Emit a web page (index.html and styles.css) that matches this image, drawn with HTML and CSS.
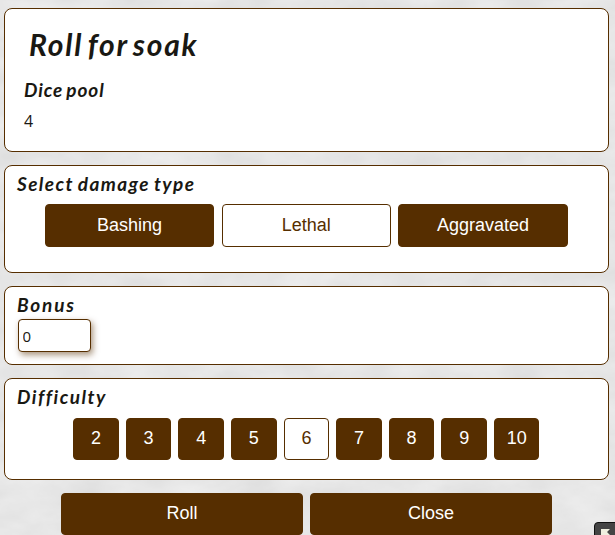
FILE: index.html
```html
<!DOCTYPE html>
<html lang="en">
<head>
<meta charset="utf-8">
<title>Roll for soak</title>
<link rel="stylesheet" href="styles.css">
</head>
<body>
<svg class="paper" width="615" height="535" aria-hidden="true">
  <filter id="grain" x="0" y="0" width="100%" height="100%" color-interpolation-filters="sRGB">
    <feTurbulence type="fractalNoise" baseFrequency="0.018 0.035" numOctaves="4" seed="8"/>
    <feColorMatrix values="0.08 0 0 0 0.862  0.08 0 0 0 0.862  0.08 0 0 0 0.862  0 0 0 0 1"/>
  </filter>
  <rect width="615" height="535" filter="url(#grain)"/>
</svg>
<form class="dialog">
  <section class="panel summary">
    <h1 class="title">Roll for soak</h1>
    <h2 class="heading pool">Dice pool</h2>
    <div class="value">4</div>
  </section>
  <section class="panel damage">
    <h2 class="heading select">Select damage type</h2>
    <div class="types">
      <button type="button" class="btn">Bashing</button>
      <button type="button" class="btn active">Lethal</button>
      <button type="button" class="btn">Aggravated</button>
    </div>
  </section>
  <section class="panel bonus">
    <h2 class="heading bonus-label">Bonus</h2>
    <input class="field" type="text" value="0">
  </section>
  <section class="panel difficulty">
    <h2 class="heading difficulty-label">Difficulty</h2>
    <div class="numbers">
      <button type="button" class="btn">2</button>
      <button type="button" class="btn">3</button>
      <button type="button" class="btn">4</button>
      <button type="button" class="btn">5</button>
      <button type="button" class="btn active">6</button>
      <button type="button" class="btn">7</button>
      <button type="button" class="btn">8</button>
      <button type="button" class="btn">9</button>
      <button type="button" class="btn">10</button>
    </div>
  </section>
  <div class="actions">
    <button type="button" class="btn">Roll</button>
    <button type="button" class="btn">Close</button>
  </div>
</form>
<div class="resize">
  <svg width="21" height="13" viewBox="0 0 21 13"><path d="M6 6H15L12 9L17 14H11L9 12L6 15Z" fill="#f0f0e0"/></svg>
</div>
</body>
</html>
```

FILE: styles.css
```css
* { box-sizing: border-box; }
body {
  position: relative;
  width: 615px;
  height: 535px;
  margin: 0;
  overflow: hidden;
  background: #e6e6e6;
  color: #191813;
  font-family: "Liberation Sans", Arial, sans-serif;
}
.paper { position: absolute; inset: 0; z-index: -1; }
.dialog {
  display: flex;
  flex-direction: column;
  gap: 13px;
  padding: 8px 6px 0 4px;
}
.panel {
  border: 1px solid #562e00;
  border-radius: 8px;
  background: #fff;
}
.summary { height: 144px; padding: 15px 19px; }
.damage { height: 108px; padding: 5px 12px; }
.bonus { height: 79px; padding: 5px 12px; }
.difficulty { height: 102px; padding: 5px 12px; }
.title, .heading {
  margin: 0;
  font-family: Lato, "Open Sans", sans-serif;
  font-style: italic;
  font-weight: 700;
  white-space: nowrap;
}
.title {
  height: 40px;
  padding-left: 5px;
  font-size: 30px;
  line-height: 40px;
  letter-spacing: 1.8px;
  word-spacing: -4px;
}
.heading { height: 27px; font-size: 19px; line-height: 26px; }
.pool { margin-top: 13px; letter-spacing: 0.9px; word-spacing: -2px; }
.value {
  margin-top: 6px;
  font: 16px/22px "Open Sans", "Noto Sans", sans-serif;
}
.select { letter-spacing: 1.4px; word-spacing: -1.5px; }
.bonus-label { letter-spacing: 1.8px; }
.difficulty-label { letter-spacing: 1.5px; }
.types {
  display: grid;
  grid-template-columns: repeat(3, 1fr);
  gap: 7.5px;
  height: 43px;
  margin: 6px 28.5px 0 28px;
}
.btn {
  padding: 0 0 2px;
  border: 1px solid #562e00;
  border-radius: 4px;
  background: #562e00;
  color: #fff;
  font: 18px/38px "Liberation Sans", Arial, sans-serif;
  text-align: center;
}
.btn.active { background: #fff; color: #562e00; }
.field {
  display: block;
  width: 73px;
  height: 33px;
  margin-left: 0.5px;
  padding: 0 4px;
  border: 1px solid #562e00;
  border-radius: 4px;
  background: #fff;
  box-shadow: 2px 3px 6px rgba(86, 46, 0, 0.5);
  color: #191813;
  font: 15px/31px "Open Sans", "Noto Sans", sans-serif;
}
.numbers {
  display: grid;
  grid-template-columns: repeat(9, 1fr);
  gap: 7.2px;
  height: 42px;
  margin: 7px 56.5px 0 56.3px;
}
.actions {
  display: grid;
  grid-template-columns: 1fr 1fr;
  gap: 7px;
  height: 42px;
  margin: 0 57px;
}
.resize {
  position: absolute;
  left: 594px;
  top: 522px;
  width: 30px;
  height: 30px;
  border: 1px solid #111;
  border-radius: 4px;
  background: #444;
}
.resize svg { display: block; }
```
